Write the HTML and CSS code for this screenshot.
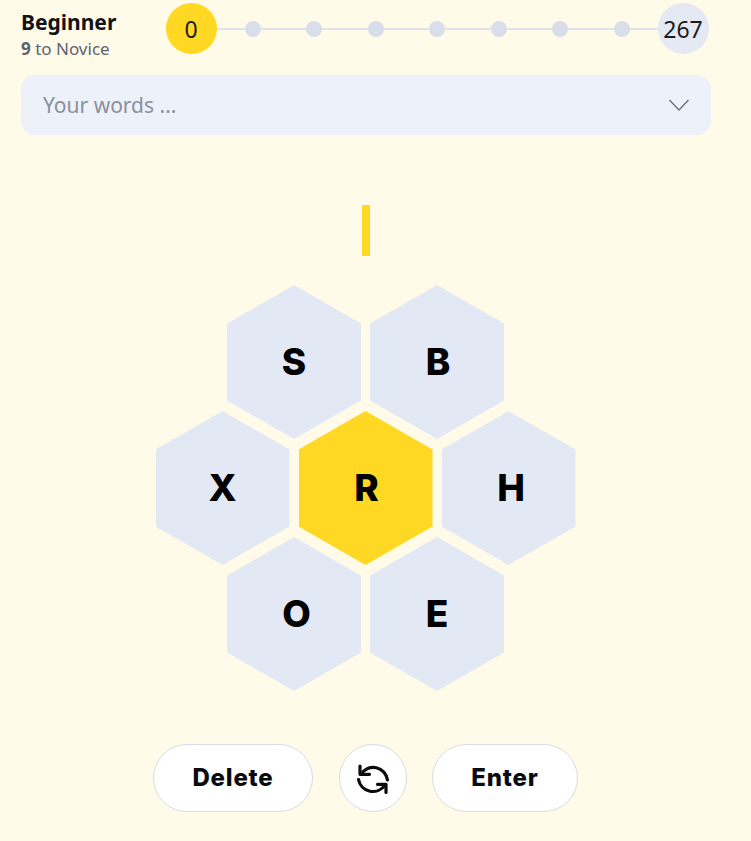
FILE: index.html
```html
<!DOCTYPE html>
<html lang="en">
<head>
  <meta charset="UTF-8" />
  <meta name="viewport" content="width=device-width, initial-scale=1.0"/>
  <title>Spelling Bee</title>
  <link rel="stylesheet" href="styles.css">
</head>
<body>
  <main class="game">
    <header class="status">
      <div class="rank">
        <h1>Beginner</h1>
        <p><b>9</b> to Novice</p>
      </div>
      <div class="progress">
        <span class="score current">0</span>
        <span class="dot"></span>
        <span class="dot"></span>
        <span class="dot"></span>
        <span class="dot"></span>
        <span class="dot"></span>
        <span class="dot"></span>
        <span class="dot"></span>
        <span class="score">267</span>
      </div>
    </header>

    <div class="words">
      <span>Your words ...</span>
      <svg width="20" height="12" viewBox="0 0 20 12" fill="none" stroke="#6b7280" stroke-width="1.4">
        <path d="M0.5 1 L10 11 L19.5 1"/>
      </svg>
    </div>

    <div class="cursor"></div>

    <div class="hive">
      <div class="hive-row">
        <div class="cell"><span>S</span></div>
        <div class="cell nudge"><span>B</span></div>
      </div>
      <div class="hive-row">
        <div class="cell"><span>X</span></div>
        <div class="cell center nudge"><span>R</span></div>
        <div class="cell nudge-more"><span>H</span></div>
      </div>
      <div class="hive-row">
        <div class="cell nudge-more"><span>O</span></div>
        <div class="cell"><span>E</span></div>
      </div>
    </div>

    <div class="actions">
      <button class="btn delete">Delete</button>
      <button class="btn shuffle" aria-label="Shuffle">
        <svg width="36" height="36" viewBox="0 0 36 36" fill="none" stroke="#0b0b0f" stroke-width="3.2" stroke-linecap="round" stroke-linejoin="round">
          <path d="M6 14 A14.5 14.5 0 0 1 32.5 20"/>
          <path d="M5 6 V14.3 H14.5"/>
          <path d="M3.5 19.5 A14.5 14.5 0 0 0 30 24.8"/>
          <path d="M31 32.5 V24.3 H22.5"/>
        </svg>
      </button>
      <button class="btn enter">Enter</button>
    </div>
  </main>
</body>
</html>
```

FILE: styles.css
```css
body {
  margin: 0;
  font-family: "Noto Sans", Arial, sans-serif;
  background: #fffbe8;
  color: #111;
}
.game {
  width: 690px;
  margin-left: 21px;
  padding-top: 3px;
}

.status {
  display: flex;
  align-items: center;
  height: 51px;
}
.rank {
  width: 162px;
  flex-shrink: 0;
  align-self: flex-start;
  padding-top: 6px;
}
.rank h1 {
  margin: 0;
  font-size: 21px;
  line-height: 26px;
  font-weight: 700;
  color: #111318;
}
.rank p {
  margin: 3px 0 0;
  font-size: 17px;
  line-height: 22px;
  color: #5c6370;
}
.rank b {
  font-weight: 700;
}

.progress {
  position: relative;
  width: 508px;
  display: flex;
  justify-content: space-between;
  align-items: center;
}
.progress::before {
  content: "";
  position: absolute;
  left: 0;
  right: 0;
  top: 25px;
  height: 2px;
  background: #dfe4ee;
}
.score {
  position: relative;
  width: 51px;
  height: 51px;
  margin: 0 -17.5px;
  border-radius: 50%;
  background: #e4e9f3;
  display: flex;
  align-items: center;
  justify-content: center;
  font-size: 23px;
  color: #1c1c20;
}
.score.current {
  background: #ffd823;
}
.dot {
  position: relative;
  width: 16px;
  height: 16px;
  border-radius: 50%;
  background: #d8deea;
}

.words {
  margin-top: 21px;
  height: 60px;
  padding: 0 22px;
  border-radius: 14px;
  background: #edf1fa;
  display: flex;
  align-items: center;
  justify-content: space-between;
  font-size: 21px;
  color: #8b909b;
}

.cursor {
  width: 8px;
  height: 51px;
  margin: 70px auto 0;
  background: #ffd823;
}

.hive {
  margin-top: 29px;
}
.hive-row {
  display: flex;
  justify-content: center;
  gap: 9px;
  margin-bottom: -28px;
  padding-right: 1px;
}
.cell {
  box-sizing: border-box;
  width: 134px;
  height: 154px;
  padding-bottom: 2px;
  background: #e3e9f4;
  clip-path: polygon(50% 0, 100% 25%, 100% 75%, 50% 100%, 0 75%, 0 25%);
  display: flex;
  align-items: center;
  justify-content: center;
  font-family: Inter, Arial, sans-serif;
  font-size: 37px;
  font-weight: 800;
  color: #000;
}
.cell.center {
  background: #ffd823;
}
.cell.nudge span {
  margin-left: 2px;
}
.cell.nudge-more span {
  margin-left: 5px;
}

.actions {
  display: flex;
  justify-content: center;
  gap: 25px;
  margin-top: 81px;
  padding-right: 1px;
}
.btn {
  height: 68px;
  border: 1px solid #d9dcdf;
  border-radius: 34px;
  background: #fff;
  font-family: Inter, Arial, sans-serif;
  font-size: 24px;
  font-weight: 800;
  letter-spacing: 0.8px;
  color: #0b0b0f;
  cursor: pointer;
  padding: 0 0 2px;
  display: flex;
  align-items: center;
  justify-content: center;
}
.btn.delete {
  width: 160px;
  margin-right: 1px;
}
.btn.shuffle {
  width: 68px;
  padding: 0;
}
.btn.enter {
  width: 146px;
}
```
